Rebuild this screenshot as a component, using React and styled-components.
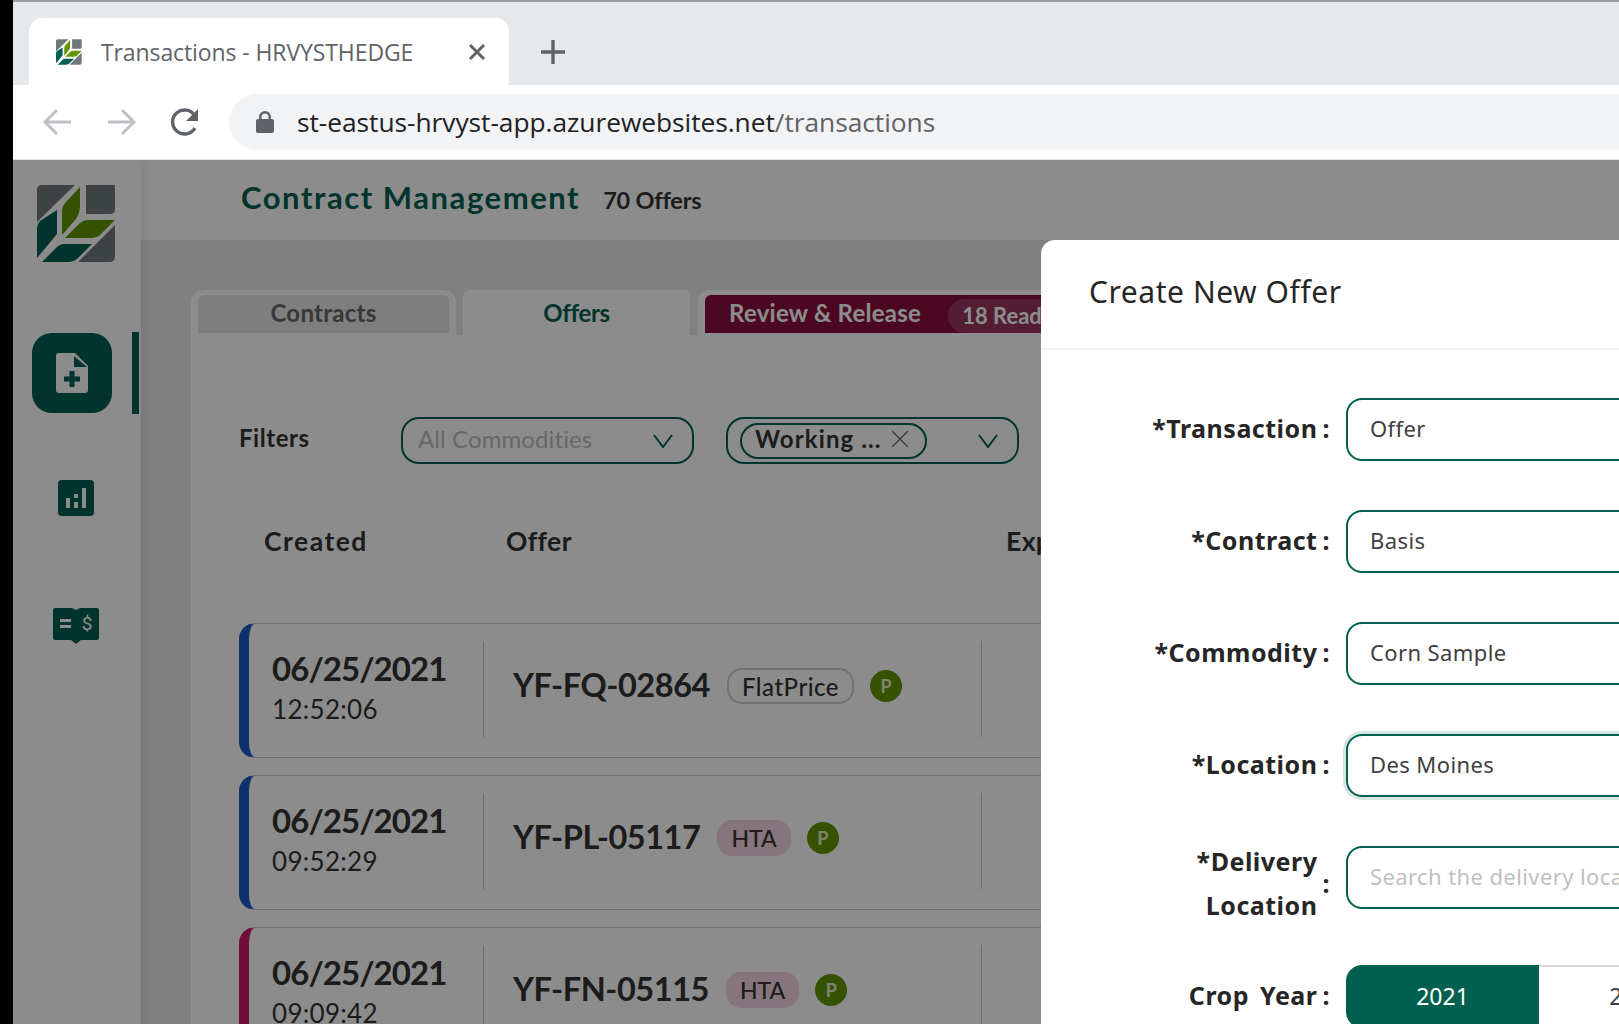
import React from 'react';
import styled, { createGlobalStyle } from 'styled-components';

const TEAL = '#006050';

const GlobalStyle = createGlobalStyle`
  html, body { margin: 0; padding: 0; height: 100%; background: #000; overflow: hidden; }
  body { font-family: "Lato", "Liberation Sans", sans-serif; color: #333; }
  #root { height: 100%; }
  * { box-sizing: border-box; }
`;

// Browser window, black strip on the left
const Frame = styled.div`
  margin-left: 13px;
  height: 1024px;
  display: flex;
  flex-direction: column;
  overflow: hidden;
  background: #fff;
`;

const TabStrip = styled.div`
  height: 85px;
  flex: none;
  display: flex;
  align-items: flex-end;
  padding-left: 16px;
  background: #e6e9ec;
  border-top: 2px solid #9a9c9f;
`;

const BrowserTab = styled.div`
  width: 480px;
  height: 67px;
  display: flex;
  align-items: center;
  padding: 0 23px 0 27px;
  background: #fff;
  border-radius: 14px 14px 0 0;
`;

const Favicon = styled.div`
  width: 26px;
  height: 26px;
  flex: none;
`;

const TabTitle = styled.span`
  flex: 1;
  margin-left: 19px;
  font-family: "Open Sans", sans-serif;
  font-size: 23px;
  letter-spacing: -0.1px;
  color: #5f6368;
  white-space: nowrap;
`;

const NewTab = styled.div`
  margin: 0 0 18px 29px;
  width: 30px;
  height: 30px;
  color: #5f6368;
`;

const Toolbar = styled.div`
  height: 75px;
  flex: none;
  display: flex;
  align-items: center;
  padding: 0 0 1px 28px;
  background: #fff;
  border-bottom: 1px solid #e0e2e5;
`;

const NavIcon = styled.div`
  width: 34px;
  height: 34px;
  margin-right: ${p => p.$gap}px;
  color: ${p => p.$color};
`;

const Omnibox = styled.div`
  flex: 1;
  height: 56px;
  display: flex;
  align-items: center;
  margin-right: -40px;
  padding-left: 27px;
  background: #f1f3f4;
  border-radius: 28px;
`;

const Url = styled.span`
  margin-left: 23px;
  font-family: "Open Sans", sans-serif;
  font-size: 26.35px;
  letter-spacing: -0.05px;
  color: #202124;
  white-space: nowrap;
`;

const UrlPath = styled.span`
  color: #5f6368;
`;

// App page below the browser chrome
const Page = styled.div`
  position: relative;
  flex: 1;
  display: flex;
  overflow: hidden;
  background: #e9e9e9;
`;

const Sidebar = styled.nav`
  position: relative;
  width: 128px;
  flex: none;
  display: flex;
  flex-direction: column;
  align-items: center;
  padding-top: 24px;
  background: #fff;
  box-shadow: 2px 0 8px rgba(0, 0, 0, 0.08);
`;

const SideLogo = styled.div`
  width: 79px;
  height: 79px;
  margin: 0 0 70px 0;
  transform: translateX(-1px);
`;

const ActiveItem = styled.div`
  position: relative;
  width: 80px;
  height: 80px;
  margin: 0 0 67px -10px;
  display: flex;
  align-items: center;
  justify-content: center;
  background: ${TEAL};
  border-radius: 20px;

  &::after {
    content: '';
    position: absolute;
    left: 100%;
    top: -1px;
    margin-left: 20px;
    width: 7px;
    height: 82px;
    background: ${TEAL};
  }
`;

const SideIcon = styled.div`
  width: ${p => p.$w}px;
  height: 36px;
  margin-bottom: 92px;
  margin-left: -2px;
`;

const Main = styled.main`
  flex: 1;
  min-width: 0;
  display: flex;
  flex-direction: column;
`;

const Header = styled.header`
  height: 80px;
  flex: none;
  display: flex;
  align-items: center;
  padding: 0 0 7px 100px;
  background: #fff;
`;

const Title = styled.h1`
  margin: 0;
  font-size: 31px;
  font-weight: 700;
  letter-spacing: 1.55px;
  color: ${TEAL};
  white-space: nowrap;
`;

const Count = styled.span`
  margin: 6px 0 0 23px;
  font-size: 23.5px;
  font-weight: 700;
  letter-spacing: -0.2px;
  color: #333;
  white-space: nowrap;
`;

const Content = styled.div`
  flex: 1;
  padding: 50px 0 0 50px;
`;

const Tabs = styled.div`
  height: 45px;
  display: flex;
  align-items: flex-end;
  gap: 7px;
  width: 1200px;
`;

const Tab = styled.div`
  height: 45px;
  width: ${p => p.$w}px;
  margin-left: ${p => p.$shift || 0}px;
  padding: ${p => (p.$active ? 0 : '5px 7px 2px')};
  background: #fff;
  border-radius: 12px 12px 0 0;
`;

const TabInner = styled.div`
  height: 100%;
  display: flex;
  align-items: center;
  justify-content: ${p => (p.$left ? 'flex-start' : 'center')};
  padding: 0 0 ${p => (p.$raised ? 4 : 0)}px ${p => (p.$left ? 24 : 0)}px;
  font-size: 24px;
  font-weight: 700;
  letter-spacing: ${p => (p.$raised ? 0.25 : -0.3)}px;
  white-space: nowrap;
  color: ${p => p.$color};
  background: ${p => p.$bg};
  border-radius: 6px 6px 0 0;
`;

const ReadyBadge = styled.span`
  margin: 7px 0 0 27px;
  padding: 3px 14px;
  height: 34px;
  border-radius: 17px;
  font-size: 22px;
  font-weight: 700;
  letter-spacing: 0;
  color: #fff;
  background: rgba(255, 255, 255, 0.16);
`;

const Panel = styled.div`
  width: 1400px;
  height: 700px;
  padding: 82px 0 0 49px;
  background: #fff;
`;

const FilterBar = styled.div`
  display: flex;
  align-items: center;
`;

const FilterLabel = styled.span`
  width: 162px;
  margin-left: -1px;
  padding-bottom: 6px;
  font-size: 24px;
  font-weight: 700;
  letter-spacing: 0.55px;
  color: #333;
`;

const Select = styled.div`
  width: 293px;
  height: 47px;
  margin-right: 32px;
  display: flex;
  align-items: center;
  justify-content: space-between;
  padding: 0 19px 0 ${p => (p.$chip ? 12 : 15)}px;
  border: 2px solid ${TEAL};
  border-radius: 18px;
  background: #fff;
`;

const Placeholder = styled.span`
  padding-bottom: 4px;
  font-size: 24px;
  letter-spacing: 0.1px;
  color: #bdbdbd;
`;

const Chip = styled.span`
  width: 187px;
  height: 36px;
  display: flex;
  align-items: center;
  justify-content: space-between;
  padding: 0 16px 4px 13px;
  border: 2px solid ${TEAL};
  border-radius: 18px;
  font-size: 24px;
  font-weight: 700;
  letter-spacing: 1.1px;
  color: #333;
`;

const TableHead = styled.div`
  display: flex;
  padding: 61px 0 0 24px;
  height: 159px;
  font-size: 26.5px;
  font-weight: 700;
  color: #333;
`;

const HeadCell = styled.span`
  width: ${p => p.$w}px;
  flex: none;
  letter-spacing: ${p => p.$spacing || 0.4}px;
`;

const Rows = styled.div`
  display: flex;
  flex-direction: column;
  gap: 17px;
`;

const Row = styled.div`
  height: 135px;
  margin-left: -1px;
  display: flex;
  padding: 17px 0 20px;
  border: 1px solid #c9c9c9;
  border-left: 10px solid ${p => p.$accent};
  border-radius: 16px;
  background: #fff;
`;

const DateCell = styled.div`
  width: 235px;
  flex: none;
  padding: 6px 0 0 23px;
  border-right: 1px solid #c4c4c4;
`;

const DateText = styled.div`
  font-size: 33px;
  line-height: 42px;
  font-weight: 700;
  letter-spacing: -0.95px;
  color: #333;
`;

const TimeText = styled.div`
  margin-top: 3px;
  font-size: 26px;
  line-height: 34px;
  letter-spacing: 0.3px;
  color: #333;
`;

const OfferCell = styled.div`
  width: 498px;
  flex: none;
  display: flex;
  align-items: center;
  padding: 0 0 9px 29px;
  border-right: 1px solid #c4c4c4;
`;

const OfferId = styled.span`
  font-size: 32.5px;
  font-weight: 700;
  letter-spacing: -0.45px;
  color: #333;
  white-space: nowrap;
`;

const TypeBadge = styled.span`
  height: 36px;
  margin: 3px 0 0 17px;
  padding: 0 ${p => (p.$outlined ? 13 : 12)}px;
  display: flex;
  align-items: center;
  border-radius: 15px;
  font-size: ${p => (p.$outlined ? 24 : 23)}px;
  font-weight: 500;
  letter-spacing: ${p => (p.$outlined ? 0.5 : 0)}px;
  color: #333;
  border: 2px solid ${p => (p.$outlined ? '#cfcfcf' : '#f5d5e2')};
  background: ${p => (p.$outlined ? '#fff' : '#f5d5e2')};
`;

const PBadge = styled.span`
  width: 32px;
  height: 32px;
  margin: 3px 0 0 16px;
  display: flex;
  align-items: center;
  justify-content: center;
  border-radius: 50%;
  font-size: 18px;
  font-weight: 700;
  color: #e6eecb;
  background: #619500;
`;

const Mask = styled.div`
  position: absolute;
  inset: 0;
  background: rgba(0, 0, 0, 0.45);
`;

// Modal running off the right side of the window
const Modal = styled.section`
  position: absolute;
  left: 1028px;
  top: 80px;
  width: 900px;
  height: 900px;
  background: #fff;
  border-radius: 14px;
  font-family: "Noto Sans", sans-serif;
`;

const ModalHead = styled.div`
  height: 110px;
  display: flex;
  align-items: center;
  padding: 0 0 5px 48px;
  border-bottom: 2px solid #f0f0f0;
  font-size: 30px;
  letter-spacing: 0.55px;
  color: #262626;
`;

const Form = styled.div`
  padding-top: 48px;
  display: flex;
  flex-direction: column;
`;

const FormRow = styled.div`
  height: 63px;
  display: flex;
  align-items: center;
  margin-bottom: ${p => p.$gap || 49}px;
`;

const Label = styled.div`
  width: 305px;
  flex: none;
  display: flex;
  align-items: center;
  justify-content: flex-end;
  padding: ${p => p.$top || 0}px 16px ${p => (p.$top ? 0 : 4)}px 0;
  font-size: 25px;
  font-weight: 700;
  letter-spacing: 0.5px;
  word-spacing: 4px;
  line-height: 44px;
  color: #262626;
  text-align: right;
`;

const Colon = styled.span`
  margin-left: 5px;
`;

const Input = styled.div`
  width: 500px;
  height: 63px;
  display: flex;
  align-items: center;
  padding: 0 0 3px 22px;
  border: 2px solid ${TEAL};
  border-radius: 16px;
  font-size: 22px;
  letter-spacing: 0.4px;
  color: ${p => (p.$placeholder ? '#bfbfbf' : '#404040')};
  white-space: nowrap;
  box-shadow: ${p => (p.$focused ? '0 0 0 3px rgba(0, 96, 80, 0.16)' : 'none')};
`;

const Toggle = styled.div`
  display: flex;
  height: 63px;
`;

const ToggleItem = styled.div`
  width: 193px;
  flex: none;
  display: flex;
  align-items: center;
  justify-content: center;
  padding-bottom: 4px;
  font-size: 23px;
  color: ${p => (p.$on ? '#fff' : '#404040')};
  background: ${p => (p.$on ? TEAL : '#fff')};
  border-top: 2px solid ${p => (p.$on ? TEAL : '#d9d9d9')};
  border-radius: ${p => (p.$on ? '16px 0 0 16px' : 0)};
`;

const Logo = () => (
  <svg viewBox="0 0 79 79" width="100%" height="100%">
    <g fill="#70787c">
      <path d="M0 38V6q0-5 5-5h33z" />
      <path d="M49 1h29v24q0 5-5 5H49z" />
      <path d="M41 78l37-37v31q0 6-6 6z" />
    </g>
    <g fill="#619500">
      <path d="M43 3v19q0 8-5 14L25 51V28q0-6 4-10z" />
      <path d="M78 36H52q-6 0-10 4L28 54h26q6 0 10-4z" />
    </g>
    <g fill={TEAL}>
      <path d="M20 26v24L0 74V44q0-4 3-7z" />
      <path d="M5 78l15-15q3-3 7-3h28L41 74q-4 4-10 4z" />
    </g>
  </svg>
);

const Chevron = () => (
  <svg width="20" height="14" viewBox="0 0 20 14" fill="none" stroke={TEAL} strokeWidth="2">
    <path d="M1 1l9 12 9-12" />
  </svg>
);

const rows = [
  { accent: '#1c5ac8', date: '06/25/2021', time: '12:52:06', id: 'YF-FQ-02864', type: 'FlatPrice', outlined: true },
  { accent: '#1c5ac8', date: '06/25/2021', time: '09:52:29', id: 'YF-PL-05117', type: 'HTA' },
  { accent: '#ca1b69', date: '06/25/2021', time: '09:09:42', id: 'YF-FN-05115', type: 'HTA' }
];

const App = () => (
  <>
    <GlobalStyle />
    <Frame>
      <TabStrip>
        <BrowserTab>
          <Favicon>
            <Logo />
          </Favicon>
          <TabTitle>Transactions - HRVYSTHEDGE</TabTitle>
          <svg width="18" height="18" viewBox="0 0 18 18" stroke="#5f6368" strokeWidth="3" fill="none">
            <path d="M2 2l14 14M16 2L2 16" />
          </svg>
        </BrowserTab>
        <NewTab>
          <svg viewBox="0 0 30 30" stroke="currentColor" strokeWidth="3.4" fill="none">
            <path d="M15 3v24M3 15h24" />
          </svg>
        </NewTab>
      </TabStrip>

      <Toolbar>
        <NavIcon $gap={29} $color="#bdc1c6">
          <svg viewBox="0 0 34 34" fill="none" stroke="currentColor" strokeWidth="3">
            <path d="M30 17H5M16 5L4 17l12 12" />
          </svg>
        </NavIcon>
        <NavIcon $gap={30} $color="#bdc1c6">
          <svg viewBox="0 0 34 34" fill="none" stroke="currentColor" strokeWidth="3">
            <path d="M4 17h25M18 5l12 12-12 12" />
          </svg>
        </NavIcon>
        <NavIcon $gap={27} $color="#5f6368">
          <svg viewBox="0 0 34 34">
            <path
              fill="none"
              stroke="currentColor"
              strokeWidth="3.4"
              d="M27 23a12 12 0 1 1 0-12"
            />
            <path fill="currentColor" d="M30 4v12H18z" />
          </svg>
        </NavIcon>
        <Omnibox>
          <svg width="18" height="22" viewBox="0 0 18 22">
            <path fill="#5f6368" d="M3 8V6a6 6 0 0 1 12 0v2h1a2 2 0 0 1 2 2v10a2 2 0 0 1-2 2H2a2 2 0 0 1-2-2V10a2 2 0 0 1 2-2zm2.5 0h7V6a3.5 3.5 0 0 0-7 0z" />
          </svg>
          <Url>
            st-eastus-hrvyst-app.azurewebsites.net<UrlPath>/transactions</UrlPath>
          </Url>
        </Omnibox>
      </Toolbar>

      <Page>
        <Sidebar>
          <SideLogo>
            <Logo />
          </SideLogo>
          <ActiveItem>
            <svg width="32" height="40" viewBox="0 0 32 40">
              <path fill="#fff" d="M3 0h16l13 13v24a3 3 0 0 1-3 3H3a3 3 0 0 1-3-3V3a3 3 0 0 1 3-3z" />
              <path fill={TEAL} d="M18 3l13 11H18zM13.5 18h5v5.5H24v5h-5.5V34h-5v-5.500H8v-5h5.500z" />
            </svg>
          </ActiveItem>
          <SideIcon $w={36}>
            <svg width="36" height="36" viewBox="0 0 36 36">
              <rect width="36" height="36" rx="4" fill={TEAL} />
              <path fill="#fff" d="M8 18h4v10H8zM16 14h4v4h-4zM16 22h4v6h-4zM24 8h4v20h-4z" />
            </svg>
          </SideIcon>
          <SideIcon $w={46}>
            <svg width="46" height="36" viewBox="0 0 46 36">
              <path
                fill={TEAL}
                d="M2 0h17l4 2 4-2h17a2 2 0 0 1 2 2v28a2 2 0 0 1-2 2H28l-5 4-5-4H2a2 2 0 0 1-2-2V2a2 2 0 0 1 2-2z"
              />
              <path fill="#fff" d="M7 11h11v3H7zM7 17h11v3H7z" />
              <text x="34" y="22" fontSize="19" fontFamily="Roboto, sans-serif" fill="#fff" textAnchor="middle">$</text>
            </svg>
          </SideIcon>
        </Sidebar>

        <Main>
          <Header>
            <Title>Contract Management</Title>
            <Count>70 Offers</Count>
          </Header>
          <Content>
            <Tabs>
              <Tab $w={265}>
                <TabInner $bg="#e6e6e6" $color="#666" $raised>Contracts</TabInner>
              </Tab>
              <Tab $w={227} $active>
                <TabInner $bg="#fff" $color={TEAL}>Offers</TabInner>
              </Tab>
              <Tab $w={500} $shift={1}>
                <TabInner $bg="#8a1041" $color="#fff" $left $raised>
                  Review &amp; Release
                  <ReadyBadge>18 Ready</ReadyBadge>
                </TabInner>
              </Tab>
            </Tabs>
            <Panel>
              <FilterBar>
                <FilterLabel>Filters</FilterLabel>
                <Select>
                  <Placeholder>All Commodities</Placeholder>
                  <Chevron />
                </Select>
                <Select $chip>
                  <Chip>
                    Working ...
                    <svg width="18" height="18" viewBox="0 0 18 18" stroke="#777" strokeWidth="1.6" fill="none">
                      <path d="M1 1l16 16M17 1L1 17" />
                    </svg>
                  </Chip>
                  <Chevron />
                </Select>
              </FilterBar>
              <TableHead>
                <HeadCell $w={242} $spacing={1.5}>Created</HeadCell>
                <HeadCell $w={500}>Offer</HeadCell>
                <HeadCell $w={200}>Expiration</HeadCell>
              </TableHead>
              <Rows>
                {rows.map(row => (
                  <Row key={row.id} $accent={row.accent}>
                    <DateCell>
                      <DateText>{row.date}</DateText>
                      <TimeText>{row.time}</TimeText>
                    </DateCell>
                    <OfferCell>
                      <OfferId>{row.id}</OfferId>
                      <TypeBadge $outlined={row.outlined}>{row.type}</TypeBadge>
                      <PBadge>P</PBadge>
                    </OfferCell>
                  </Row>
                ))}
              </Rows>
            </Panel>
          </Content>
        </Main>

        <Mask />

        <Modal>
          <ModalHead>Create New Offer</ModalHead>
          <Form>
            <FormRow>
              <Label>*Transaction<Colon>:</Colon></Label>
              <Input>Offer</Input>
            </FormRow>
            <FormRow>
              <Label>*Contract<Colon>:</Colon></Label>
              <Input>Basis</Input>
            </FormRow>
            <FormRow>
              <Label>*Commodity<Colon>:</Colon></Label>
              <Input>Corn Sample</Input>
            </FormRow>
            <FormRow>
              <Label>*Location<Colon>:</Colon></Label>
              <Input $focused>Des Moines</Input>
            </FormRow>
            <FormRow $gap={56}>
              <Label $top={10}>
                <span>*Delivery<br />Location</span>
                <Colon>:</Colon>
              </Label>
              <Input $placeholder>Search the delivery location</Input>
            </FormRow>
            <FormRow>
              <Label>Crop Year<Colon>:</Colon></Label>
              <Toggle>
                <ToggleItem $on>2021</ToggleItem>
                <ToggleItem>2022</ToggleItem>
              </Toggle>
            </FormRow>
          </Form>
        </Modal>
      </Page>
    </Frame>
  </>
);

export default App;
